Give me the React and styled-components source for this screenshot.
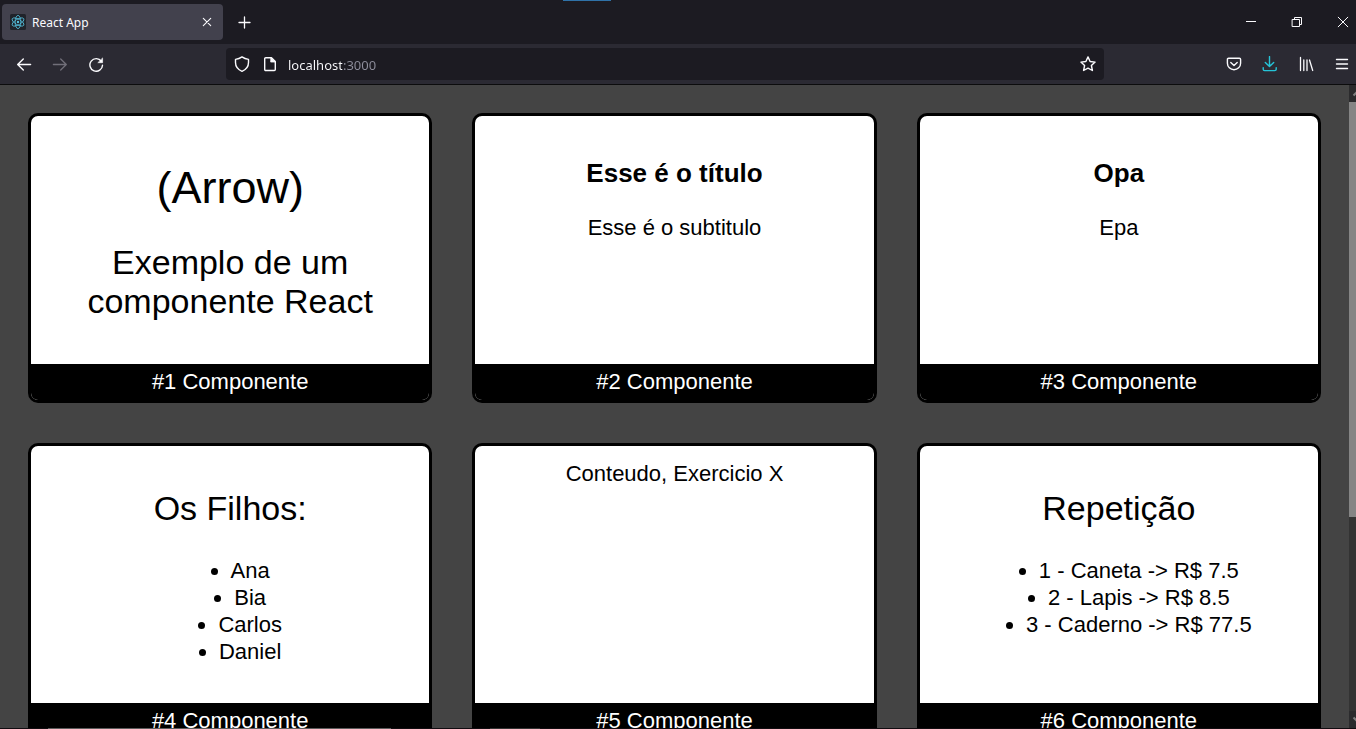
import React from "react";
import styled, { createGlobalStyle } from "styled-components";

const GlobalStyle = createGlobalStyle`
  * { box-sizing: border-box; }
  body { margin: 0; background: #444; }
`;

const Window = styled.div`
  display: flex;
  flex-direction: column;
  height: 100vh;
  overflow: hidden;
  font-family: "Noto Sans", sans-serif;
  font-size: 12px;
  color: #fbfbfe;
`;

const TabBar = styled.header`
  position: relative;
  display: flex;
  flex: none;
  align-items: center;
  height: 44px;
  padding-left: 2px;
  background: #1c1b22;
`;

const LoadingMark = styled.span`
  position: absolute;
  top: 0;
  left: calc(50% - 115px);
  width: 48px;
  height: 1px;
  background: #2f72a8;
`;

const Tab = styled.div`
  display: flex;
  align-items: center;
  width: 221px;
  height: 36px;
  padding: 0 4px 0 8px;
  border-radius: 4px;
  background: #42414d;
`;

const TabTitle = styled.span`
  flex: 1;
  margin-left: 6px;
`;

const IconButton = styled.button`
  display: flex;
  flex: none;
  align-items: center;
  justify-content: center;
  width: ${(p) => p.$width || 32}px;
  height: 32px;
  padding: 0;
  border: 0;
  border-radius: 4px;
  background: none;
  color: ${(p) => p.$color || "#fbfbfe"};
`;

const WindowControls = styled.div`
  display: flex;
  gap: 20px;
  margin-left: auto;
`;

const Toolbar = styled.nav`
  display: flex;
  flex: none;
  align-items: center;
  height: 41px;
  padding-left: 8px;
  border-bottom: 1px solid #0c0c0d;
  background: #2b2a33;
`;

const ButtonGroup = styled.div`
  display: flex;
  flex: none;
  gap: ${(p) => p.$gap}px;
`;

const AddressBar = styled.form`
  display: flex;
  flex: 1;
  align-items: center;
  min-width: 0;
  height: 32px;
  margin: 0 116px 0 114px;
  border-radius: 4px;
  background: #1c1b22;
`;

const AddressInput = styled.input`
  flex: 1;
  min-width: 0;
  height: 32px;
  margin-left: 6px;
  padding: 2px 0 0;
  border: 0;
  outline: 0;
  font: 13px "Noto Sans", sans-serif;
  color: transparent;
  caret-color: #fbfbfe;
  background: linear-gradient(90deg, #fbfbfe 54px, #8f8f9d 54px);
  background-clip: text;
`;

const Viewport = styled.div`
  display: flex;
  flex: 1;
  min-height: 0;
`;

const Page = styled.main`
  flex: 1;
  min-width: 0;
  overflow: hidden;
  padding: 28px;
  background: #444;
  color: #000;
  font: 22px/27px "Liberation Sans", Arial, sans-serif;
`;

const Cards = styled.div`
  display: grid;
  grid-template-columns: repeat(3, 1fr);
  gap: 40px;
`;

const CardBox = styled.article`
  display: flex;
  flex-direction: column;
  overflow: hidden;
  border: 3px solid #000;
  border-radius: 10px;
  background: #fff;
  text-align: center;
`;

const CardContent = styled.div`
  flex: 1;
  padding: 14px 15px 15px;

  h1, h2, h3 { font-weight: 400; }
  h1 { margin: 32px 0 29px; font-size: 45px; line-height: 52px; }
  h2 { margin: 29px 0 28px; font-size: 34px; line-height: 39px; }
  h3 { margin: 28px 0 26px; font-size: 26px; line-height: 30px; font-weight: 700; }
  p { margin: 22px 0; }
  ul { margin: 22px 0; padding: 1px 0 1px 40px; }
  li { width: fit-content; margin: 0 auto; }
`;

const CardFooter = styled.footer`
  padding: 4px 0 5px;
  background: #000;
  color: #fff;
`;

const ScrollTrack = styled.div`
  display: flex;
  flex: none;
  flex-direction: column;
  width: 7px;
  overflow: hidden;
  background: #333;
`;

const ScrollArrow = styled.div`
  flex: none;
  width: 17px;
  height: 17px;
  background: #2b2b2d;
  color: #808080;
  svg { display: block; }
`;

const ScrollRange = styled.div`
  flex: 194;
`;

const ScrollThumb = styled.div`
  flex: 416;
  background: #858585;
`;

const BottomEdge = styled.div`
  flex: none;
  height: 1px;
  background: linear-gradient(90deg, #100c10 48px, #5c5c5c 48px 391px, #100c10 391px 490px, #333 490px 540px, #100c10 540px);
`;

function Icon({ children, size = 16, width = 1.4 }) {
  return (
    <svg width={size} height={size} viewBox="0 0 16 16" fill="none" stroke="currentColor"
      strokeWidth={width} strokeLinecap="round" strokeLinejoin="round" aria-hidden="true">
      {children}
    </svg>
  );
}

function ReactLogo() {
  return (
    <svg width="16" height="16" viewBox="0 0 16 16" fill="none" stroke="#53c1de" strokeWidth="0.8" aria-hidden="true">
      <rect width="16" height="16" rx="1.5" fill="#20232a" stroke="none" />
      {[30, 90, 150].map((angle) => (
        <ellipse key={angle} cx="8" cy="8" rx="6.6" ry="2.8" transform={`rotate(${angle} 8 8)`} />
      ))}
      <circle cx="8" cy="8" r="1.2" fill="#53c1de" stroke="none" />
    </svg>
  );
}

function Card({ title, children }) {
  return (
    <CardBox>
      <CardContent>{children}</CardContent>
      <CardFooter>{title}</CardFooter>
    </CardBox>
  );
}

const filhos = ["Ana", "Bia", "Carlos", "Daniel"];
const produtos = [
  { id: 1, nome: "Caneta", preco: 7.5 },
  { id: 2, nome: "Lapis", preco: 8.5 },
  { id: 3, nome: "Caderno", preco: 77.5 },
];

export default function App() {
  return (
    <Window>
      <GlobalStyle />
      <TabBar>
        <LoadingMark />
        <Tab>
          <ReactLogo />
          <TabTitle>React App</TabTitle>
          <IconButton $width={24} aria-label="Close tab">
            <Icon width={1.1}><path d="M4.3 4.3l7.4 7.4M11.7 4.3l-7.4 7.4" /></Icon>
          </IconButton>
        </Tab>
        <IconButton $width={42} aria-label="New tab">
          <Icon width={1.3}><path d="M8.500 3v11M3 8.500h11" /></Icon>
        </IconButton>
        <WindowControls>
          <IconButton $width={26} aria-label="Minimize">
            <Icon width={1}><path d="M3.5 7.5h9" strokeLinecap="square" /></Icon>
          </IconButton>
          <IconButton $width={26} aria-label="Restore">
            <Icon width={1}><path d="M3.5 5.5h7v7h-7zM5.5 5.5v-2h7v7h-2" strokeLinejoin="miter" /></Icon>
          </IconButton>
          <IconButton $width={26} aria-label="Close">
            <Icon width={1}><path d="M3.2 3.2l9.6 9.6M12.8 3.2l-9.6 9.6" /></Icon>
          </IconButton>
        </WindowControls>
      </TabBar>

      <Toolbar>
        <ButtonGroup $gap={4}>
          <IconButton aria-label="Back">
            <Icon><path d="M14.6 8.500H1.8M7.3 3L1.7 8.500l5.6 5.500" /></Icon>
          </IconButton>
          <IconButton $color="#716f79" aria-label="Forward">
            <Icon width={1.3}><path d="M1.4 8.500h12.8M8.7 3l5.6 5.500-5.6 5.500" /></Icon>
          </IconButton>
          <IconButton aria-label="Reload">
            <Icon width={1.4}>
              <path d="M13.4 5.400A6.3 6.3 0 1 0 14.500 9.200" />
              <path d="M14.6 2.300v4.400h-4.400z" fill="currentColor" strokeWidth="0.6" />
            </Icon>
          </IconButton>
        </ButtonGroup>
        <AddressBar>
          <IconButton type="button" aria-label="Tracking protection">
            <Icon><path d="M8 .9c1.9 1.4 4 2.2 6.500 2.500v3.200c0 3.800-2.300 7-6.500 8.700C3.800 13.600 1.500 10.400 1.500 6.600V3.400C4 3.100 6.100 2.300 8 .9z" /></Icon>
          </IconButton>
          <IconButton type="button" $width={24} aria-label="Site information">
            <Icon>
              <path d="M3.700 1.700h5.800l3.800 3.800v8a1 1 0 0 1-1 1H3.700a1 1 0 0 1-1-1V2.700a1 1 0 0 1 1-1z" />
              <path d="M9 1.700l4.300 4.300H9z" fill="currentColor" strokeWidth="0.8" />
            </Icon>
          </IconButton>
          <AddressInput aria-label="Address" defaultValue="localhost:3000" spellCheck={false} />
          <IconButton type="button" aria-label="Bookmark this page">
            <Icon><path d="M8 .9l2.100 4.600 5 .6-3.700 3.400 1 5L8 12.100l-4.400 2.400 1-5L.9 6.100l5-.6z" /></Icon>
          </IconButton>
        </AddressBar>
        <ButtonGroup $gap={8}>
          <IconButton $width={28} aria-label="Pocket">
            <Icon><path d="M2.600 2.200h10.800a1.200 1.200 0 0 1 1.200 1.200v3.800a6.600 6.600 0 0 1-13.200 0V3.400a1.200 1.200 0 0 1 1.200-1.200z" /><path d="M4.800 6.400L8 9.400l3.200-3" /></Icon>
          </IconButton>
          <IconButton $width={28} $color="#25c4d8" aria-label="Downloads">
            <Icon><path d="M7.500 .6v9.800M3.300 6.400l4.200 4.100 4.200-4.100M1.200 11.600v1.600a1.400 1.400 0 0 0 1.400 1.400h10.200a1.400 1.400 0 0 0 1.400-1.400v-1.600" /></Icon>
          </IconButton>
          <IconButton $width={28} aria-label="Library">
            <Icon width={1.3}><path d="M2.500 1.500v13M5.800 4v10.500M9 4v10.500M11.500 4l3.200 10.500" /></Icon>
          </IconButton>
          <IconButton $width={28} aria-label="Menu">
            <Icon width={1.4}><path d="M2.500 3.500h11M2.500 8h11M2.500 12.500h11" /></Icon>
          </IconButton>
        </ButtonGroup>
      </Toolbar>

      <Viewport>
        <Page>
          <Cards>
            <Card title="#1 Componente">
              <h1>(Arrow)</h1>
              <h2>Exemplo de um componente React</h2>
            </Card>
            <Card title="#2 Componente">
              <h3>Esse é o título</h3>
              <p>Esse é o subtitulo</p>
            </Card>
            <Card title="#3 Componente">
              <h3>Opa</h3>
              <p>Epa</p>
            </Card>
            <Card title="#4 Componente">
              <h2>Os Filhos:</h2>
              <ul>{filhos.map((nome) => <li key={nome}>{nome}</li>)}</ul>
            </Card>
            <Card title="#5 Componente">Conteudo, Exercicio X</Card>
            <Card title="#6 Componente">
              <h2>Repetição</h2>
              <ul>
                {produtos.map((p) => <li key={p.id}>{`${p.id} - ${p.nome} -> R$ ${p.preco}`}</li>)}
              </ul>
            </Card>
          </Cards>
        </Page>
        <ScrollTrack aria-hidden="true">
          <ScrollArrow>
            <svg width="17" height="17" viewBox="0 0 17 17" fill="none" stroke="currentColor" strokeWidth="2"><path d="M4.500 10.500l4-4 4 4" /></svg>
          </ScrollArrow>
          <ScrollThumb />
          <ScrollRange />
          <ScrollArrow>
            <svg width="17" height="17" viewBox="0 0 17 17" fill="none" stroke="currentColor" strokeWidth="2"><path d="M4.500 6.500l4 4 4-4" /></svg>
          </ScrollArrow>
        </ScrollTrack>
      </Viewport>
      <BottomEdge />
    </Window>
  );
}
